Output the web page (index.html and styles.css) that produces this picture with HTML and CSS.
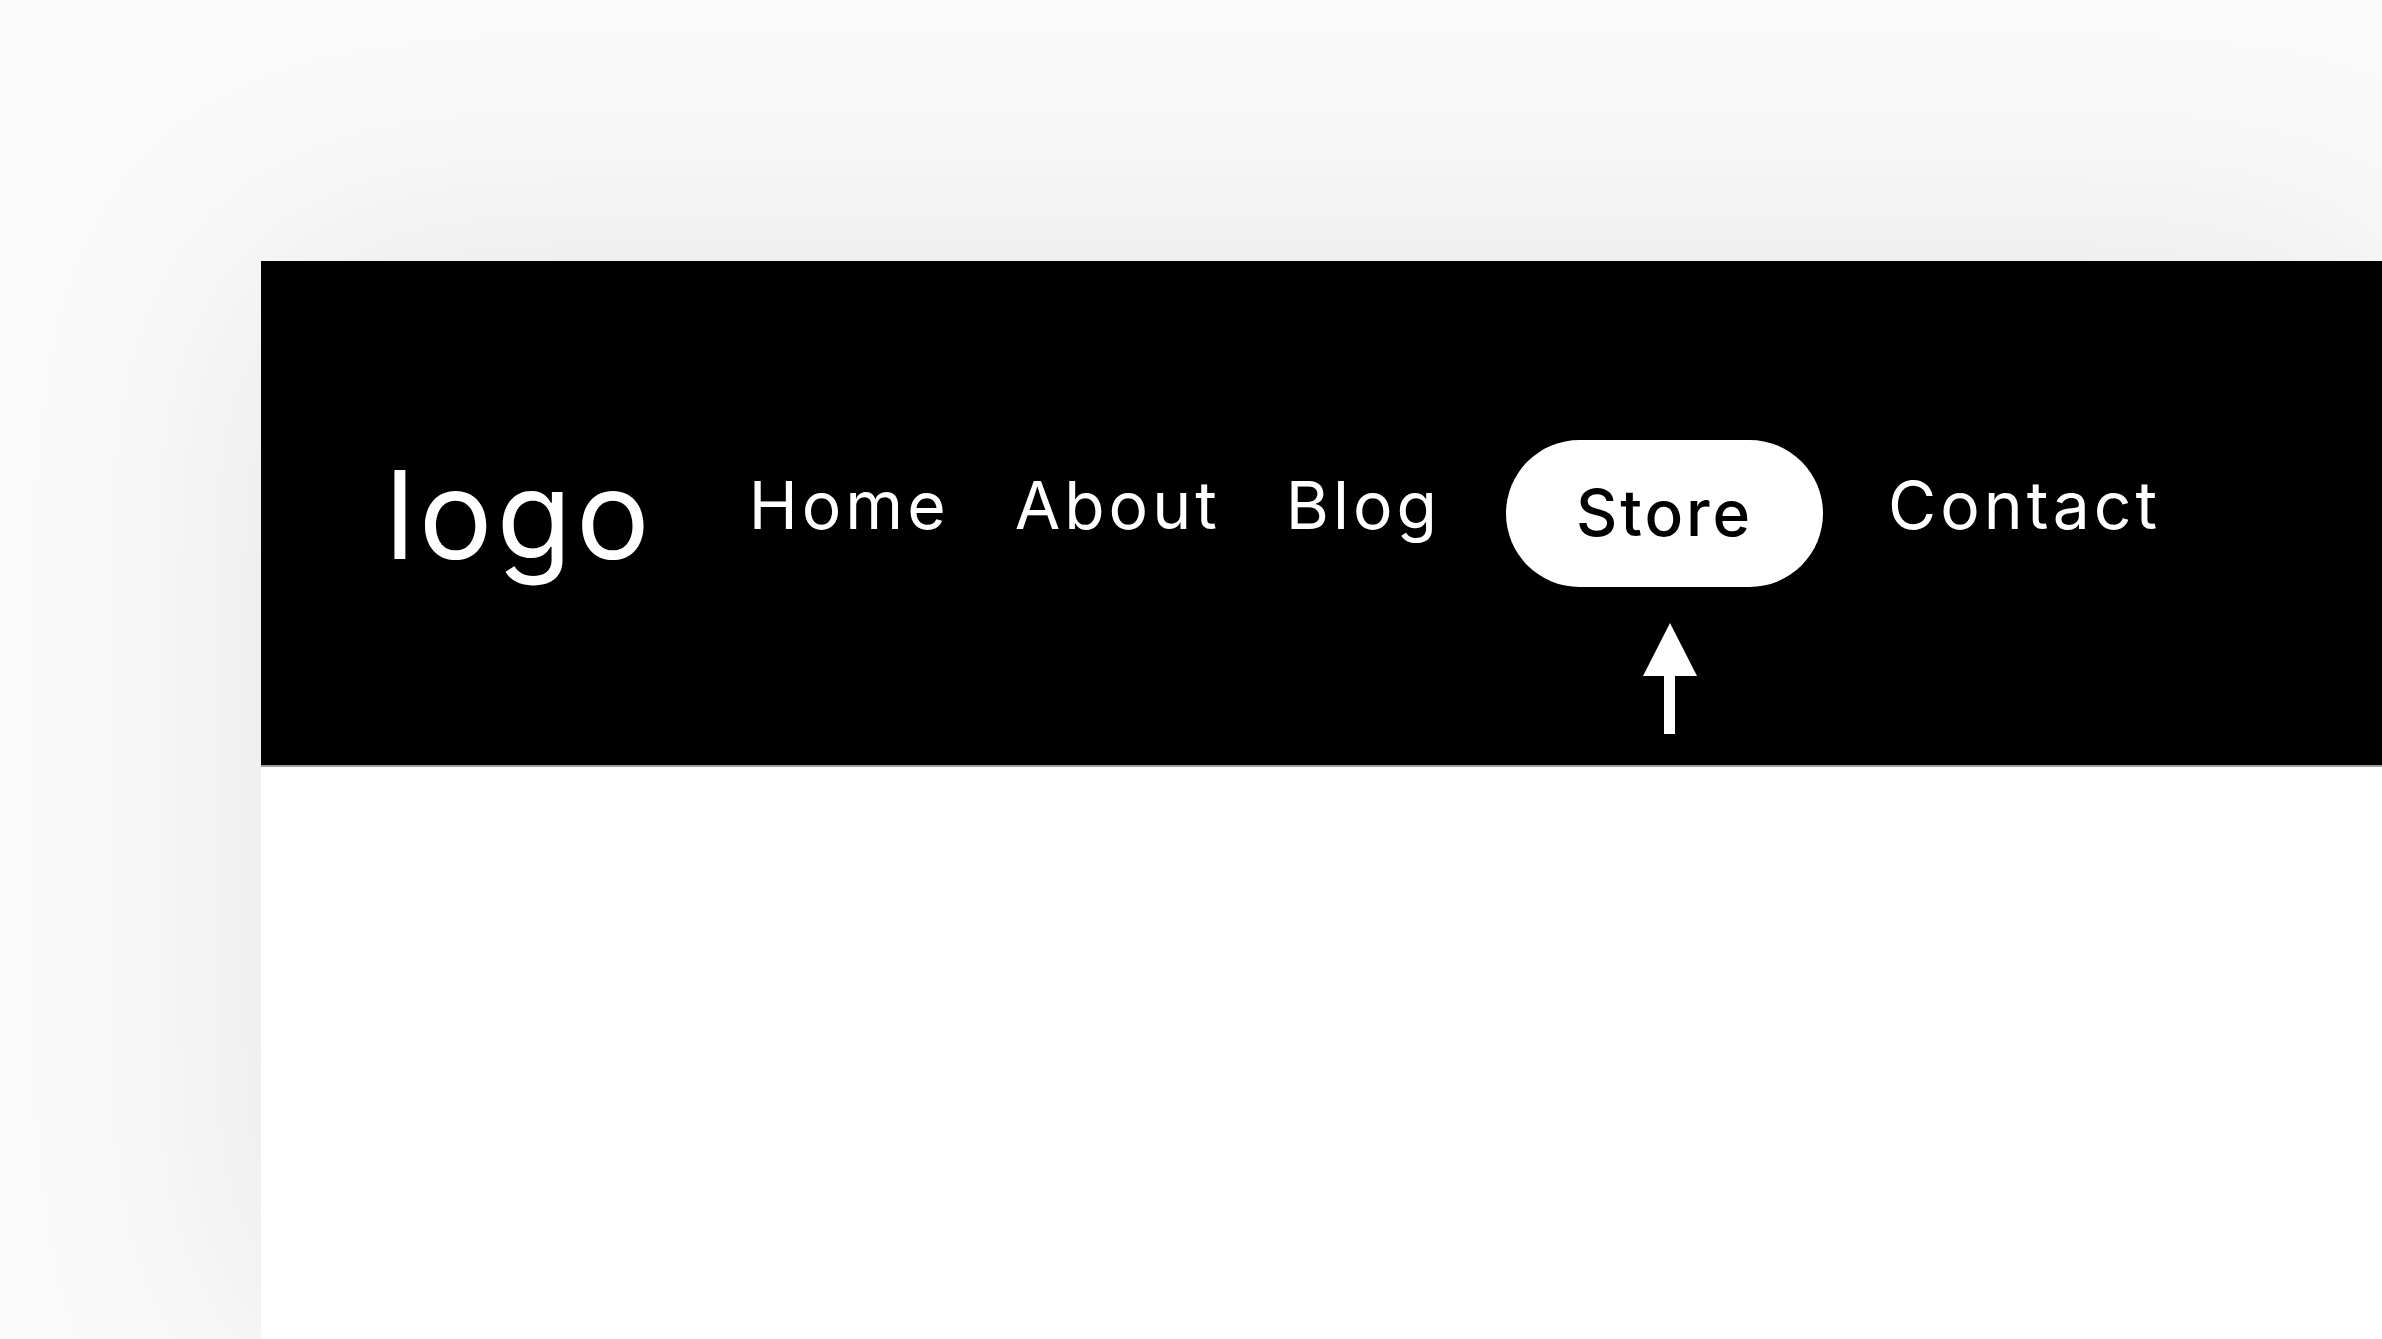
FILE: index.html
```html
<!DOCTYPE html>
<html lang="en">
<head>
<meta charset="utf-8">
<title>Navbar</title>
<link rel="stylesheet" href="styles.css">
</head>
<body>
<div class="card">
  <header class="header">
    <div class="logo">logo</div>
    <nav class="nav">
      <a class="nav-link" href="#">Home</a>
      <a class="nav-link" href="#">About</a>
      <a class="nav-link" href="#">Blog</a>
      <span class="pill-wrap">
        <a class="nav-link pill" href="#">Store</a>
        <svg class="arrow" width="54" height="111" viewBox="0 0 54 111" aria-hidden="true">
          <polygon points="27,0 54,53 0,53" fill="#fff"/>
          <rect x="21" y="52" width="11" height="59" fill="#fff"/>
        </svg>
      </span>
      <a class="nav-link" href="#">Contact</a>
    </nav>
  </header>
  <main class="content"></main>
</div>
</body>
</html>
```

FILE: styles.css
```css
html, body {
  margin: 0;
  padding: 0;
  height: 100%;
}
body {
  background: #fafafa;
  overflow: hidden;
  font-family: Inter, "Noto Sans", sans-serif;
}
.card {
  margin: 261px 0 0 261px;
  height: 1078px;
  background: #fff;
  box-shadow: 0 0 260px rgba(0, 0, 0, 0.085);
}
.header {
  height: 504px;
  background: #000;
  border-bottom: 2px solid #9c9c9c;
  display: flex;
  align-items: center;
  padding-left: 124px;
}
.logo {
  color: #fff;
  font-size: 123px;
  font-weight: 400;
  line-height: 1;
  letter-spacing: 4px;
  margin-top: 2px;
}
.nav {
  display: flex;
  align-items: center;
  margin-left: 95px;
  gap: 65px;
}
.nav-link {
  color: #fff;
  text-decoration: none;
  font-size: 66px;
  font-weight: 400;
  line-height: 1;
  letter-spacing: 4px;
  position: relative;
  top: -8px;
}
.pill-wrap {
  position: relative;
  display: flex;
}
.pill {
  top: 0;
  background: #fff;
  color: #000;
  font-weight: 500;
  font-size: 64px;
  letter-spacing: 3px;
  height: 147px;
  width: 317px;
  border-radius: 74px;
  display: flex;
  align-items: center;
  justify-content: center;
  box-sizing: border-box;
}
.arrow {
  position: absolute;
  left: 137px;
  top: 183px;
}
.content {
  background: #fff;
}
```
